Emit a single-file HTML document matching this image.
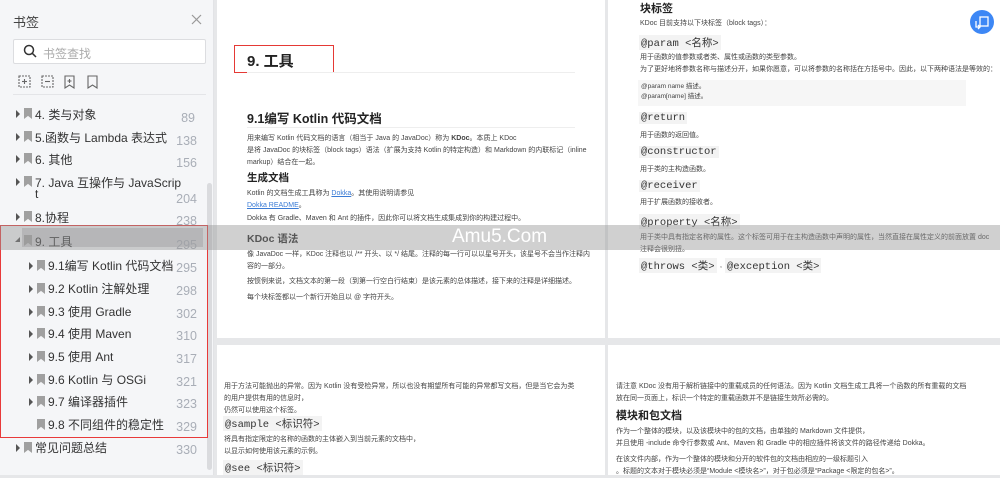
<!DOCTYPE html><html><head><meta charset="utf-8"><style>
*{margin:0;padding:0;box-sizing:border-box}
body{width:1000px;height:475px;overflow:hidden;background:#e6e7e9;font-family:"Liberation Sans","Noto Sans CJK SC",sans-serif;position:relative;color:#333}
#sb{position:absolute;left:0;top:0;width:214px;height:475px;background:#f5f6f8;border-right:1px solid #e2e3e6}
.t{position:absolute;font-size:12px;color:#333;white-space:nowrap}
.n{position:absolute;font-size:12.5px;color:#a9aeb7;right:16px}
.tri{position:absolute;width:0;height:0;border-left:4px solid #555;border-top:4px solid transparent;border-bottom:4px solid transparent}
.bm{position:absolute;width:8px;height:11px;background:#a0a0a0;clip-path:polygon(0 0,100% 0,100% 100%,50% 72%,0 100%)}
.pg{position:absolute;background:#fff}
.p{position:absolute;font-size:7px;color:#444;white-space:nowrap;line-height:12px}
.h{position:absolute;font-weight:bold;color:#222;white-space:nowrap}
.c{position:absolute;font-family:"Liberation Mono","Noto Sans CJK SC",monospace;font-size:10.5px;background:#f3f3f3;padding:0 2px;color:#333;white-space:nowrap}
a{color:#3a7bd5;text-decoration:underline}
</style></head><body>
<div id="sb">
<div class="t" style="left:13px;top:12px;font-size:13px;color:#444">书签</div>
<svg style="position:absolute;left:191px;top:14px" width="11" height="11" stroke="#999" stroke-width="1.2"><line x1="1" y1="1" x2="10" y2="10"/><line x1="10" y1="1" x2="1" y2="10"/></svg>
<div style="position:absolute;left:13px;top:39px;width:193px;height:25px;background:#fff;border:1px solid #dcdde0;border-radius:2px"></div>
<svg style="position:absolute;left:23px;top:44px" width="14" height="14"><circle cx="6" cy="6" r="4.5" fill="none" stroke="#333" stroke-width="1.5"/><line x1="9.3" y1="9.3" x2="13" y2="13" stroke="#333" stroke-width="1.5"/></svg>
<div class="t" style="left:43px;top:45px;color:#aaa;font-size:12px">书签查找</div>
<svg style="position:absolute;left:17px;top:74px" width="90" height="16" fill="none" stroke="#666" stroke-width="1.1">
<rect x="2" y="2" width="11" height="11" stroke-dasharray="2 1"/><line x1="7.5" y1="5" x2="7.5" y2="10"/><line x1="5" y1="7.5" x2="10" y2="7.5"/>
<rect x="25" y="2" width="11" height="11" stroke-dasharray="2 1"/><line x1="28" y1="7.5" x2="33" y2="7.5"/>
<path d="M48 2h9v12l-4.5-3-4.5 3z"/><line x1="52.5" y1="5" x2="52.5" y2="9"/><line x1="50.5" y1="7" x2="54.5" y2="7"/>
<path d="M71 2h9v12l-4.5-3-4.5 3z"/>
</svg>
<div style="position:absolute;left:13px;top:94px;width:193px;border-top:1px solid #e4e5e8"></div>
<div style="position:absolute;left:207px;top:183px;width:5px;height:287px;background:#dadbde;border-radius:3px"></div>
<div style="position:absolute;left:22px;top:228px;width:181px;height:19px;background:#cfd0d3"></div>

<div class="tri" style="left:16px;top:110px"></div><div class="bm" style="left:24px;top:108px"></div><div class="t" style="left:35px;top:106px">4. 类与对象</div><div class="n" style="top:111px;right:18px">89</div>
<div class="tri" style="left:16px;top:133px"></div><div class="bm" style="left:24px;top:131px"></div><div class="t" style="left:35px;top:129px">5.函数与 Lambda 表达式</div><div class="n" style="top:134px">138</div>
<div class="tri" style="left:16px;top:155px"></div><div class="bm" style="left:24px;top:153px"></div><div class="t" style="left:35px;top:151px">6. 其他</div><div class="n" style="top:156px">156</div>
<div class="tri" style="left:16px;top:178px"></div><div class="bm" style="left:24px;top:176px"></div><div class="t" style="left:35px;top:174px">7. Java 互操作与 JavaScrip</div><div class="t" style="left:35px;top:187px">t</div><div class="n" style="top:192px">204</div>
<div class="tri" style="left:16px;top:213px"></div><div class="bm" style="left:24px;top:211px"></div><div class="t" style="left:35px;top:209px">8.协程</div><div class="n" style="top:214px">238</div>
<div style="position:absolute;left:15px;top:237px;width:0;height:0;border-left:5px solid transparent;border-bottom:5px solid #555"></div><div class="bm" style="left:24px;top:235px"></div><div class="t" style="left:35px;top:233px">9. 工具</div><div class="n" style="top:238px">295</div>
<div class="tri" style="left:29px;top:262px"></div><div class="bm" style="left:37px;top:260px"></div><div class="t" style="left:48px;top:257px">9.1编写 Kotlin 代码文档</div><div class="n" style="top:261px">295</div>
<div class="tri" style="left:29px;top:285px"></div><div class="bm" style="left:37px;top:283px"></div><div class="t" style="left:48px;top:280px">9.2 Kotlin 注解处理</div><div class="n" style="top:284px">298</div>
<div class="tri" style="left:29px;top:308px"></div><div class="bm" style="left:37px;top:306px"></div><div class="t" style="left:48px;top:303px">9.3 使用 Gradle</div><div class="n" style="top:307px">302</div>
<div class="tri" style="left:29px;top:330px"></div><div class="bm" style="left:37px;top:328px"></div><div class="t" style="left:48px;top:325px">9.4 使用 Maven</div><div class="n" style="top:329px">310</div>
<div class="tri" style="left:29px;top:353px"></div><div class="bm" style="left:37px;top:351px"></div><div class="t" style="left:48px;top:348px">9.5 使用 Ant</div><div class="n" style="top:352px">317</div>
<div class="tri" style="left:29px;top:376px"></div><div class="bm" style="left:37px;top:374px"></div><div class="t" style="left:48px;top:371px">9.6 Kotlin 与 OSGi</div><div class="n" style="top:375px">321</div>
<div class="tri" style="left:29px;top:398px"></div><div class="bm" style="left:37px;top:396px"></div><div class="t" style="left:48px;top:393px">9.7 编译器插件</div><div class="n" style="top:397px">323</div>
<div class="bm" style="left:37px;top:419px"></div><div class="t" style="left:48px;top:416px">9.8 不同组件的稳定性</div><div class="n" style="top:420px">329</div>
<div class="tri" style="left:16px;top:444px"></div><div class="bm" style="left:24px;top:442px"></div><div class="t" style="left:35px;top:439px">常见问题总结</div><div class="n" style="top:443px">330</div>
<div style="position:absolute;left:0;top:225px;width:208px;height:213px;border:1.5px solid #e83a3a"></div>
</div>

<div class="pg" style="left:217px;top:0;width:388px;height:338px">
<div style="position:absolute;left:17px;top:45px;width:100px;height:28px;border:1.5px solid #e53935"></div>
<div class="h" style="left:30px;top:50px;font-size:15px">9. 工具</div>
<div style="position:absolute;left:30px;top:72px;width:328px;border-top:1px solid #eee"></div>
<div class="h" style="left:30px;top:108px;font-size:12.5px">9.1编写 Kotlin 代码文档</div>
<div style="position:absolute;left:30px;top:127px;width:328px;border-top:1px solid #eee"></div>
<div class="p" style="left:30px;top:133px">用来编写 Kotlin 代码文档的语言（相当于 Java 的 JavaDoc）称为 <b>KDoc</b>。本质上 KDoc<br>是将 JavaDoc 的块标签（block tags）语法（扩展为支持 Kotlin 的特定构造）和 Markdown 的内联标记（inline<br>markup）结合在一起。</div>
<div class="h" style="left:30px;top:170px;font-size:10.5px">生成文档</div>
<div class="p" style="left:30px;top:188px">Kotlin 的文档生成工具称为 <a>Dokka</a>。其使用说明请参见<br><a>Dokka README</a>。</div>
<div class="p" style="left:30px;top:213px">Dokka 有 Gradle、Maven 和 Ant 的插件，因此你可以将文档生成集成到你的构建过程中。</div>
<div class="h" style="left:30px;top:231px;font-size:10.5px">KDoc 语法</div>
<div class="p" style="left:30px;top:249px">像 JavaDoc 一样，KDoc 注释也以 /** 开头、以 */ 结尾。注释的每一行可以以星号开头，该星号不会当作注释内<br>容的一部分。</div>
<div class="p" style="left:30px;top:276px">按惯例来说，文档文本的第一段（到第一行空白行结束）是该元素的总体描述，接下来的注释是详细描述。</div>
<div class="p" style="left:30px;top:292px">每个块标签都以一个新行开始且以 @ 字符开头。</div>
</div>

<div class="pg" style="left:608px;top:0;width:392px;height:338px">
<div class="h" style="left:32px;top:0px;font-size:11px">块标签</div>
<div class="p" style="left:32px;top:18px">KDoc 目前支持以下块标签（block tags）：</div>
<div class="c" style="left:31px;top:35px">@param &lt;名称&gt;</div>
<div class="p" style="left:32px;top:52px">用于函数的值参数或者类、属性或函数的类型参数。<br>为了更好地将参数名称与描述分开，如果你愿意，可以将参数的名称括在方括号中。因此，以下两种语法是等效的：</div>
<div style="position:absolute;left:30px;top:80px;width:328px;height:26px;background:#f6f6f6"></div>
<div class="p" style="left:33px;top:82px;font-size:6.5px;line-height:10px">@param name 描述。<br>@param[name] 描述。</div>
<div class="c" style="left:31px;top:112px">@return</div>
<div class="p" style="left:32px;top:130px">用于函数的返回值。</div>
<div class="c" style="left:31px;top:146px">@constructor</div>
<div class="p" style="left:32px;top:164px">用于类的主构造函数。</div>
<div class="c" style="left:31px;top:180px">@receiver</div>
<div class="p" style="left:32px;top:197px">用于扩展函数的接收者。</div>
<div class="c" style="left:31px;top:214px">@property &lt;名称&gt;</div>
<div class="p" style="left:32px;top:232px">用于类中具有指定名称的属性。这个标签可用于在主构造函数中声明的属性，当然直接在属性定义的前面放置 doc<br>注释会很别扭。</div>
<div class="c" style="left:31px;top:258px">@throws &lt;类&gt;</div><div class="p" style="left:112px;top:260px">,</div><div class="c" style="left:117px;top:258px">@exception &lt;类&gt;</div>
<div style="position:absolute;left:362px;top:10px;width:24px;height:24px;border-radius:50%;background:#3d87f5"></div>
<svg style="position:absolute;left:366px;top:14px" width="16" height="16" fill="none" stroke="#fff" stroke-width="1.3"><rect x="6" y="3" width="8" height="9"/><path d="M2 7v6h4M4 11l2 2-2 2"/></svg>
</div>

<div class="pg" style="left:217px;top:345px;width:388px;height:130px">
<div class="p" style="left:7px;top:36px">用于方法可能抛出的异常。因为 Kotlin 没有受检异常，所以也没有期望所有可能的异常都写文档，但是当它会为类<br>的用户提供有用的信息时，<br>仍然可以使用这个标签。</div>
<div class="c" style="left:6px;top:71px">@sample &lt;标识符&gt;</div>
<div class="p" style="left:7px;top:89px">将具有指定限定的名称的函数的主体嵌入到当前元素的文档中，<br>以显示如何使用该元素的示例。</div>
<div class="c" style="left:6px;top:115px">@see &lt;标识符&gt;</div>
</div>
<div class="pg" style="left:608px;top:345px;width:392px;height:130px">
<div class="p" style="left:8px;top:36px">请注意 KDoc 没有用于解析链接中的重载成员的任何语法。因为 Kotlin 文档生成工具将一个函数的所有重载的文档<br>放在同一页面上，标识一个特定的重载函数并不是链接生效所必需的。</div>
<div class="h" style="left:8px;top:62px;font-size:11px">模块和包文档</div>
<div class="p" style="left:8px;top:81px">作为一个整体的模块，以及该模块中的包的文档，由单独的 Markdown 文件提供，<br>并且使用 -include 命令行参数或 Ant、Maven 和 Gradle 中的相应插件将该文件的路径传递给 Dokka。</div>
<div class="p" style="left:8px;top:109px">在该文件内部，作为一个整体的模块和分开的软件包的文档由相应的一级标题引入<br>。标题的文本对于模块必须是“Module &lt;模块名&gt;”，对于包必须是“Package &lt;限定的包名&gt;”。</div>
</div>

<div style="position:absolute;left:0;top:225px;width:1000px;height:25px;background:rgba(150,150,150,0.45)"></div>
<div style="position:absolute;left:452px;top:226px;font-size:19px;color:#fff;font-family:'Liberation Sans',sans-serif">Amu5.Com</div>
</body></html>
